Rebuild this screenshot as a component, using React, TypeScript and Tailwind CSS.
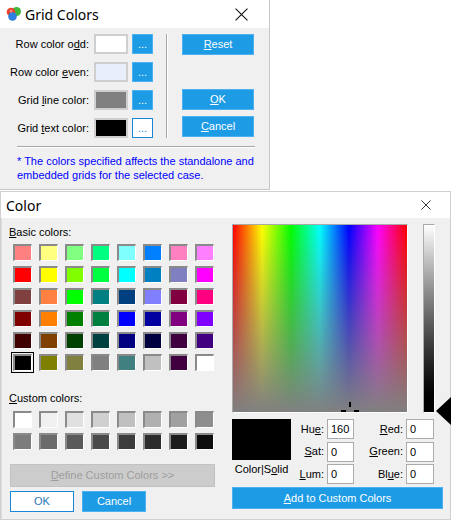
import React from 'react'

const basicColors = [
  'bg-[#ff8080]', 'bg-[#ffff80]', 'bg-[#80ff80]', 'bg-[#00ff80]', 'bg-[#80ffff]', 'bg-[#0080ff]', 'bg-[#ff80c0]', 'bg-[#ff80ff]',
  'bg-[#ff0000]', 'bg-[#ffff00]', 'bg-[#80ff00]', 'bg-[#00ff40]', 'bg-[#00ffff]', 'bg-[#0080c0]', 'bg-[#8080c0]', 'bg-[#ff00ff]',
  'bg-[#804040]', 'bg-[#ff8040]', 'bg-[#00ff00]', 'bg-[#008080]', 'bg-[#004080]', 'bg-[#8080ff]', 'bg-[#800040]', 'bg-[#ff0080]',
  'bg-[#800000]', 'bg-[#ff8000]', 'bg-[#008000]', 'bg-[#008040]', 'bg-[#0000ff]', 'bg-[#0000a0]', 'bg-[#800080]', 'bg-[#8000ff]',
  'bg-[#400000]', 'bg-[#804000]', 'bg-[#004000]', 'bg-[#004040]', 'bg-[#000080]', 'bg-[#000040]', 'bg-[#400040]', 'bg-[#400080]',
  'bg-[#000000]', 'bg-[#808000]', 'bg-[#808040]', 'bg-[#808080]', 'bg-[#408080]', 'bg-[#c0c0c0]', 'bg-[#400040]', 'bg-[#ffffff]',
]

const customColors = [
  'bg-[#ffffff]', 'bg-[#f0f0f0]', 'bg-[#e0e0e0]', 'bg-[#d0d0d0]', 'bg-[#c0c0c0]', 'bg-[#b0b0b0]', 'bg-[#a0a0a0]', 'bg-[#8e8e8e]',
  'bg-[#7c7c7c]', 'bg-[#6b6b6b]', 'bg-[#5a5a5a]', 'bg-[#4a4a4a]', 'bg-[#3c3c3c]', 'bg-[#2c2c2c]', 'bg-[#1c1c1c]', 'bg-[#0e0e0e]',
]

const blueBtn = 'bg-[#1d9be4] border border-[#4cb1ee] text-white'

function CloseX({ size }: { size: number }) {
  return (
    <svg width={size} height={size} viewBox="0 0 12 12" className="block">
      <path d="M0.5 0.5 L11.5 11.5 M11.5 0.5 L0.5 11.5" stroke="#111" strokeWidth="1" fill="none" />
    </svg>
  )
}

function AppIcon() {
  return (
    <svg width="16" height="16" viewBox="0 0 16 16" className="block">
      <circle cx="10.5" cy="5.5" r="4.5" fill="#3fb83a" />
      <circle cx="5" cy="6" r="4.3" fill="#e8412c" />
      <circle cx="6.5" cy="10.5" r="4.3" fill="#2f7fe0" />
      <circle cx="5" cy="5" r="1.6" fill="#f7a08f" opacity="0.7" />
    </svg>
  )
}

function Swatch({ color }: { color: string }) {
  return <div className={`w-[34px] h-[20px] border-2 border-[#cfcfcf] ${color}`} />
}

function DotsButton({ active }: { active?: boolean }) {
  return (
    <div
      className={`w-[21px] h-[20px] flex items-center justify-center text-[11px] leading-none ${
        active ? 'bg-white border border-[#1a86d6] text-[#1a86d6]' : blueBtn
      }`}
    >
      ...
    </div>
  )
}

function ColorCell({ color, selected }: { color: string; selected?: boolean }) {
  return (
    <div
      className={`w-[19px] h-[17px] border-t-2 border-l-2 border-t-[#8a8a8a] border-l-[#8a8a8a] border-b border-r border-b-white border-r-white ${color} ${
        selected ? 'outline outline-black outline-offset-1' : ''
      }`}
    />
  )
}

function GridColorsDialog() {
  const rows: { label: React.ReactNode; color: string; active?: boolean }[] = [
    { label: <>Row color o<u>d</u>d:</>, color: 'bg-white' },
    { label: <>Row color <u>e</u>ven:</>, color: 'bg-[#e8effb]' },
    { label: <>Grid <u>l</u>ine color:</>, color: 'bg-[#808080]' },
    { label: <>Grid <u>t</u>ext color:</>, color: 'bg-black', active: true },
  ]

  return (
    <div className="w-[270px] h-[190px] bg-[#f0f0f0] border-r border-b border-[#c6c6c6] flex flex-col">
      <div className="h-[28px] bg-white flex items-center pl-[6px] pr-[21px]">
        <AppIcon />
        <span className="ml-[3px] text-[14px] font-['Noto_Sans',sans-serif] text-black">Grid Colors</span>
        <div className="ml-auto">
          <CloseX size={13} />
        </div>
      </div>

      <div className="flex pt-[6px]">
        <div className="flex flex-col gap-[8px]">
          {rows.map((r, i) => (
            <div key={i} className="flex items-center h-[20px]">
              <div className="w-[89px] text-right text-[11px] leading-[13px] text-black">{r.label}</div>
              <div className="ml-[5px]">
                <Swatch color={r.color} />
              </div>
              <div className="ml-[4px]">
                <DotsButton active={r.active} />
              </div>
            </div>
          ))}
        </div>

        <div className="ml-[13px] w-[2px] h-[104px] border-l border-r border-l-[#a8a8a8] border-r-white" />

        <div className="ml-[14px] w-[72px] flex flex-col">
          <div className={`h-[21px] flex items-center justify-center text-[11px] ${blueBtn}`}>
            <span><u>R</u>eset</span>
          </div>
          <div className={`mt-[34px] h-[21px] flex items-center justify-center text-[11px] ${blueBtn}`}>
            <span><u>O</u>K</span>
          </div>
          <div className={`mt-[6px] h-[21px] flex items-center justify-center text-[11px] ${blueBtn}`}>
            <span><u>C</u>ancel</span>
          </div>
        </div>
      </div>

      <div className="mt-[8px] ml-[17px] w-[238px] h-[2px] border-t border-b border-t-[#a8a8a8] border-b-white" />

      <p className="mt-[7px] ml-[17px] text-[11px] leading-[13.5px] text-[#0000ff]">
        * The colors specified affects the standalone and
        <br />
        embedded grids for the selected case.
      </p>
    </div>
  )
}

function ColorDialog() {
  return (
    <div className="mt-[1px] w-[451px] h-[329px] border border-[#d0d0d0] bg-white flex flex-col">
      <div className="h-[26px] bg-white flex items-center pl-[5px] pr-[19px]">
        <span className="text-[14px] font-['Noto_Sans',sans-serif] text-black">Color</span>
        <div className="ml-auto">
          <CloseX size={10} />
        </div>
      </div>

      <div className="flex-1 flex bg-[#f0f0f0] border-l border-[#dcdcdc]">
        {/* left column */}
        <div className="w-[230px] pt-[8px] pl-[7px] flex flex-col">
          <div className="text-[11px] leading-[13px] text-black">
            <u>B</u>asic colors:
          </div>
          <div className="mt-[5px] ml-[4px] grid grid-cols-[repeat(8,19px)] gap-x-[7px] gap-y-[5px]">
            {basicColors.map((c, i) => (
              <ColorCell key={i} color={c} selected={i === 40} />
            ))}
          </div>

          <div className="mt-[21px] text-[11px] leading-[13px] text-black">
            <u>C</u>ustom colors:
          </div>
          <div className="mt-[6px] ml-[4px] grid grid-cols-[repeat(8,19px)] gap-x-[7px] gap-y-[5px]">
            {customColors.map((c, i) => (
              <ColorCell key={i} color={c} />
            ))}
          </div>

          <div className="mt-[14px] ml-[1px] w-[205px] h-[23px] bg-[#cccccc] border border-[#c2c2c2] flex items-center justify-center text-[11px] text-[#9d9d9d]">
            <span>
              <u>D</u>efine Custom Colors &gt;&gt;
            </span>
          </div>

          <div className="mt-[4px] ml-[1px] flex gap-[8px]">
            <div className="w-[64px] h-[21px] bg-white border border-[#1a86d6] flex items-center justify-center text-[11px] text-[#2a78b8]">
              OK
            </div>
            <div className={`w-[64px] h-[21px] flex items-center justify-center text-[11px] ${blueBtn}`}>
              Cancel
            </div>
          </div>
        </div>

        {/* right column */}
        <div className="pt-[6px] flex flex-col">
          <div className="flex">
            <div className="relative w-[176px] h-[189px] border border-t-[#a9a9a9] border-l-[#a9a9a9] border-r-white border-b-white bg-[linear-gradient(to_bottom,rgba(128,128,128,0),#808080),linear-gradient(to_right,#ff0000,#ffff00,#00ff00,#00ffff,#0000ff,#ff00ff,#ff0000)]">
              <svg width="20" height="12" viewBox="0 0 20 12" className="absolute left-[107px] top-[176px]">
                <rect x="9" y="1" width="2" height="5" fill="#000" />
                <rect x="1" y="9" width="5" height="2" fill="#000" />
                <rect x="14" y="9" width="5" height="2" fill="#000" />
              </svg>
            </div>
            <div className="relative ml-[15px] w-[12px] h-[189px]">
              <div className="w-[12px] h-[189px] border border-t-[#a9a9a9] border-l-[#a9a9a9] border-r-white border-b-white bg-gradient-to-b from-white to-black" />
              <svg width="15" height="28" viewBox="0 0 15 28" className="absolute left-[13px] top-[173px]">
                <polygon points="0,14 15,0 15,28" fill="#000" />
              </svg>
            </div>
          </div>

          <div className="mt-[6px] flex">
            <div className="w-[59px] flex flex-col items-center">
              <div className="w-[59px] h-[41px] bg-black" />
              <div className="mt-[3px] text-[11px] leading-[13px] text-black">
                Color|S<u>o</u>lid
              </div>
            </div>

            <div className="flex flex-col gap-[2.5px]">
              {[
                { l: <>Hu<u>e</u>:</>, v: '160' },
                { l: <><u>S</u>at:</>, v: '0' },
                { l: <><u>L</u>um:</>, v: '0' },
              ].map((f, i) => (
                <div key={i} className="flex items-center h-[20px]">
                  <div className="w-[33px] text-right text-[11px] leading-[13px] text-black">{f.l}</div>
                  <div className="ml-[3px] w-[27px] h-[20px] bg-white border border-[#ababab] text-[11px] leading-[18px] pl-[3px] text-black">
                    {f.v}
                  </div>
                </div>
              ))}
            </div>

            <div className="flex flex-col gap-[2.5px]">
              {[
                { l: <><u>R</u>ed:</>, v: '0' },
                { l: <><u>G</u>reen:</>, v: '0' },
                { l: <>Bl<u>u</u>e:</>, v: '0' },
              ].map((f, i) => (
                <div key={i} className="flex items-center h-[20px]">
                  <div className="w-[49px] text-right text-[11px] leading-[13px] text-black">{f.l}</div>
                  <div className="ml-[3px] w-[28px] h-[20px] bg-white border border-[#ababab] text-[11px] leading-[18px] pl-[3px] text-black">
                    {f.v}
                  </div>
                </div>
              ))}
            </div>
          </div>

          <div className={`mt-[3px] w-[211px] h-[22px] flex items-center justify-center text-[11px] ${blueBtn}`}>
            <span>
              <u>A</u>dd to Custom Colors
            </span>
          </div>
        </div>
      </div>
    </div>
  )
}

export default function App() {
  return (
    <div className="w-[453px] h-[520px] bg-white overflow-hidden font-['Liberation_Sans',Arial,sans-serif]">
      <GridColorsDialog />
      <ColorDialog />
    </div>
  )
}
